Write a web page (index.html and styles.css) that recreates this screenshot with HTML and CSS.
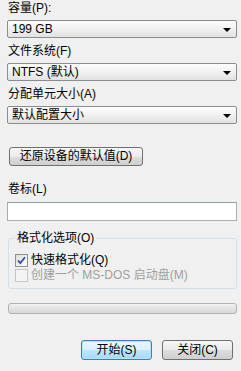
FILE: index.html
```html
<!DOCTYPE html>
<html>
<head>
<meta charset="utf-8">
<link rel="stylesheet" href="styles.css">
</head>
<body>
<div class="dlg">
  <div class="field">
    <div class="label">容量(P):</div>
    <div class="select"><span>199 GB</span><span class="arrow"></span></div>
  </div>
  <div class="field">
    <div class="label">文件系统(F)</div>
    <div class="select"><span>NTFS (默认)</span><span class="arrow"></span></div>
  </div>
  <div class="field">
    <div class="label">分配单元大小(A)</div>
    <div class="select"><span>默认配置大小</span><span class="arrow"></span></div>
  </div>
  <div class="restore">还原设备的默认值(D)</div>
  <div class="label vol">卷标(L)</div>
  <div class="input"></div>
  <fieldset class="group">
    <legend>格式化选项(O)</legend>
    <div class="check"><span class="box checked"><svg width="11" height="11" viewBox="0 0 11 11"><path d="M2 5.5 L4.3 8 L9 2.2" fill="none" stroke="#2a4fa8" stroke-width="1.8"/></svg></span><span>快速格式化(Q)</span></div>
    <div class="check disabled"><span class="box"></span><span>创建一个 MS-DOS 启动盘(M)</span></div>
  </fieldset>
  <div class="progress"></div>
  <div class="actions">
    <div class="btn default">开始(S)</div>
    <div class="btn">关闭(C)</div>
  </div>
</div>
</body>
</html>
```
FILE: styles.css
```css
html, body {
  margin: 0;
  padding: 0;
}
body {
  width: 241px;
  height: 371px;
  background: #f0f0f0;
  font-family: "Liberation Sans", "Noto Sans CJK SC", sans-serif;
  font-size: 12px;
  color: #000;
  overflow: hidden;
}
.dlg {
  padding: 0 4px 0 7px;
}
.field + .field {
  margin-top: 5px;
}
.label {
  height: 16px;
  line-height: 16px;
  margin-left: 1px;
  white-space: nowrap;
}
.select {
  margin-top: 4px;
  height: 18px;
  box-sizing: border-box;
  border: 1px solid #8a8d91;
  border-radius: 2px;
  background: linear-gradient(#fdfdfd, #f2f2f2 45%, #e2e2e2);
  display: flex;
  align-items: center;
  justify-content: space-between;
  padding: 0 5px 0 4px;
  line-height: 16px;
}
.arrow {
  width: 0;
  height: 0;
  border-left: 4px solid transparent;
  border-right: 4px solid transparent;
  border-top: 4px solid #000;
  margin-top: 1px;
}
.restore {
  margin: 23px 0 0 2px;
  width: 134px;
  height: 19px;
  box-sizing: border-box;
  border: 1px solid #707070;
  border-radius: 3px;
  background: linear-gradient(#f6f6f6, #ebebeb 50%, #dddddd 51%, #cfcfcf);
  text-align: center;
  line-height: 17px;
}
.vol {
  margin-top: 15px;
}
.input {
  margin-top: 5px;
  height: 19px;
  box-sizing: border-box;
  border: 1px solid #abadb3;
  border-top-color: #8e9bb0;
  background: #fff;
}
.group {
  margin: 11px 0 0 1px;
  padding: 9px 6px 5px 6px;
  border: 1px solid #d5dfe5;
  border-radius: 3px;
}
.group legend {
  padding: 0 2px;
  line-height: 12px;
  height: 12px;
}
.check {
  display: flex;
  align-items: center;
  gap: 3px;
  height: 15px;
  line-height: 15px;
  white-space: nowrap;
}
.box {
  width: 13px;
  height: 13px;
  box-sizing: border-box;
  border: 1px solid #8e8f8f;
  background: linear-gradient(135deg, #dcdcdc, #fdfdfd);
  display: flex;
  align-items: center;
  justify-content: center;
}
.disabled {
  color: #a0a0a0;
}
.disabled .box {
  border-color: #c5c5c5;
  background: #f4f4f4;
}
.progress {
  margin: 14px 0 0 1px;
  height: 11px;
  box-sizing: border-box;
  border: 1px solid #b2b2b2;
  border-radius: 3px;
  background: linear-gradient(#f3f3f3, #e3e3e3 50%, #d8d8d8);
}
.actions {
  margin-top: 26px;
  display: flex;
  justify-content: flex-end;
  gap: 10px;
  padding-right: 4px;
}
.btn {
  width: 71px;
  height: 20px;
  box-sizing: border-box;
  border: 1px solid #707070;
  border-radius: 3px;
  background: linear-gradient(#f6f6f6, #ebebeb 50%, #dddddd 51%, #cfcfcf);
  text-align: center;
  line-height: 18px;
}
.btn.default {
  border-color: #3c7fb1;
  background: linear-gradient(#eaf6fd, #d9f0fc 50%, #bee6fd 51%, #a7d9f5);
  box-shadow: inset 0 0 0 1px #b7e3f9;
}
```
